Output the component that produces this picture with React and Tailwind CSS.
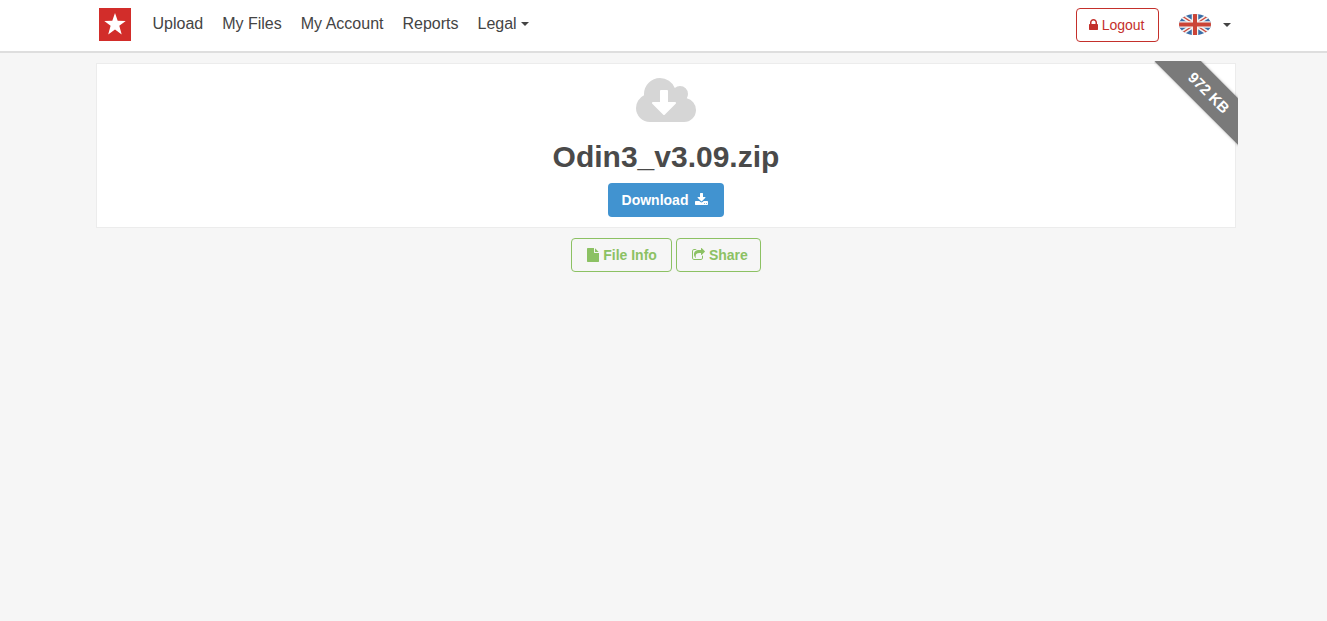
const navLinks = ["Upload", "My Files", "My Account", "Reports"];

const icons = {
  lock: {
    box: "320 0 1152 1792",
    d: "M640 768h512v-192q0-106-75-181t-181-75-181 75-75 181v192zm832 96v576q0 40-28 68t-68 28h-960q-40 0-68-28t-28-68v-576q0-40 28-68t68-28h32v-192q0-184 132-316t316-132 316 132 132 316v192h32q40 0 68 28t28 68z",
  },
  cloud: {
    box: "0 0 1920 1792",
    d: "M1280 928q0-14-9-23t-23-9h-224v-352q0-13-9.5-22.5t-22.5-9.5h-192q-13 0-22.5 9.5t-9.5 22.5v352h-224q-13 0-22.5 9.5t-9.5 22.5q0 14 9 23l352 352q9 9 23 9t23-9l351-351q10-12 10-24zm640 224q0 159-112.5 271.5t-271.5 112.5h-1088q-185 0-316.5-131.5t-131.5-316.5q0-130 70-240t188-165q-2-30-2-43 0-212 150-362t362-150q156 0 285.5 87t188.5 231q71-62 166-62 106 0 181 75t75 181q0 76-41 138 130 31 213.5 135.5t83.5 238.5z",
  },
  download: {
    box: "64 0 1664 1792",
    d: "M1344 1344q0-26-19-45t-45-19-45 19-19 45 19 45 45 19 45-19 19-45zm256 0q0-26-19-45t-45-19-45 19-19 45 19 45 45 19 45-19 19-45zm128-224v320q0 40-28 68t-68 28h-1472q-40 0-68-28t-28-68v-320q0-40 28-68t68-28h465l135 136q58 56 136 56t136-56l136-136h464q40 0 68 28t28 68zm-325-569q17 41-14 70l-448 448q-18 19-45 19t-45-19l-448-448q-31-29-14-70 17-39 59-39h256v-448q0-26 19-45t45-19h256q26 0 45 19t19 45v448h256q42 0 59 39z",
  },
  file: {
    box: "128 0 1536 1792",
    d: "M1152 512v-472q22 14 36 28l408 408q14 14 28 36h-472zm-128 32q0 40 28 68t68 28h544v1056q0 40-28 68t-68 28h-1344q-40 0-68-28t-28-68v-1600q0-40 28-68t68-28h800v544z",
  },
  share: {
    box: "64 0 1664 1792",
    d: "M1472 989v259q0 119-84.5 203.5t-203.5 84.5h-832q-119 0-203.5-84.5t-84.5-203.5v-832q0-119 84.5-203.5t203.5-84.5h255q13 0 22.5 9.5t9.5 22.5q0 27-26 32-77 26-133 60-10 4-16 4h-112q-66 0-113 47t-47 113v832q0 66 47 113t113 47h832q66 0 113-47t47-113v-214q0-19 18-29 28-13 54-37 16-16 35-8 21 9 21 29zm237-496l-384 384q-18 19-45 19-12 0-25-5-39-17-39-59v-192h-160q-323 0-438 131-119 137-74 473 3 23-20 34-8 2-12 2-16 0-26-13-10-14-21-31t-39.5-68.5-49.5-99.5-38.5-114-17.5-122q0-49 3.5-91t14-90 28-88 47-81.5 68.5-74 94.5-61.5 124.5-48.5 159.5-30.5 196.5-11h160v-192q0-42 39-59 13-5 25-5 26 0 45 19l384 384q19 19 19 45t-19 45z",
  },
};

function Icon({ name, className }) {
  return (
    <svg viewBox={icons[name].box} className={className} fill="currentColor" aria-hidden="true">
      <path d={icons[name].d} />
    </svg>
  );
}

function Caret() {
  return <span className="border-x-4 border-t-4 border-x-transparent border-t-[#444]" />;
}

function Flag() {
  return (
    <svg viewBox="0 0 32 21" className="h-[21px] w-8" aria-hidden="true">
      <clipPath id="oval">
        <ellipse cx="16" cy="10.5" rx="16" ry="10.5" />
      </clipPath>
      <g clipPath="url(#oval)">
        <rect width="32" height="21" fill="#3a6ea8" />
        <path d="M0 0l32 21M32 0L0 21" stroke="#f3f3f3" strokeWidth="4.5" />
        <path d="M0 0l32 21M32 0L0 21" stroke="#d0483a" strokeWidth="1.3" />
        <path d="M16 0v21M0 10.5h32" stroke="#f3f3f3" strokeWidth="6.5" />
        <path d="M16 0v21M0 10.5h32" stroke="#cb4436" strokeWidth="4" />
      </g>
    </svg>
  );
}

function Header() {
  return (
    <header className="border-b-2 border-[#dedede] bg-white">
      <div className="mx-auto flex h-[51px] max-w-[1140px] items-center justify-between pr-[3px] pb-0.5 pl-[5px]">
        <nav className="flex items-center gap-[19px] text-base text-[#444]">
          <a href="#" aria-label="Home" className="mr-[3px]">
            <svg viewBox="0 0 32 33" className="h-[33px] w-8" aria-hidden="true">
              <rect width="32" height="33" fill="#d22d2a" />
              <path
                d="M16 5l2.7 7.8 8 .1-6.4 4.9 2.4 8.6-6.7-5-6.8 5 2.4-8.6-6.3-4.9 8-.1z"
                fill="#fff"
              />
            </svg>
          </a>
          {navLinks.map((link) => (
            <a key={link} href="#" className="pb-0.5">
              {link}
            </a>
          ))}
          <button className="flex items-center gap-1 pb-0.5">
            Legal
            <Caret />
          </button>
        </nav>

        <div className="flex items-center gap-5">
          <button className="flex h-[34px] items-center gap-1 rounded border border-[#c4302b] pr-[13px] pl-3 text-sm text-[#c4302b]">
            <Icon name="lock" className="h-3.5 w-[9px]" />
            Logout
          </button>
          <button aria-label="Language" className="flex items-center gap-3">
            <Flag />
            <Caret />
          </button>
        </div>
      </div>
    </header>
  );
}

function SizeRibbon({ size }) {
  return (
    <div className="absolute -top-[3px] -right-[3px] h-[87px] w-[84px] overflow-hidden rounded-xs">
      <div className="absolute top-[15px] -left-2 w-[126px] rotate-45 bg-[#7a7a7a] py-1.5 text-center text-[15px] leading-[21px] font-bold text-white shadow-[0_0_3px_rgba(0,0,0,0.3)]">
        {size}
      </div>
    </div>
  );
}

export default function App() {
  return (
    <div className="min-h-screen bg-[#f6f6f6] font-['Liberation_Sans',Arial,sans-serif]">
      <Header />

      <main className="pt-2.5 pl-[5px]">
        <div className="mx-auto max-w-[1140px]">
          {/* File card */}
          <section className="relative flex flex-col items-center border border-[#ececec] bg-white pt-2.5 pb-2.5">
            <SizeRibbon size="972 KB" />
            <Icon name="cloud" className="h-14 w-[60px] text-[#d6d6d6]" />
            <h1 className="mt-[11px] mb-2.5 text-3xl leading-8 font-bold text-[#4a4a4a]">Odin3_v3.09.zip</h1>
            <button className="flex h-[34px] items-center gap-[7px] rounded bg-[#4193d0] pr-4 pl-3.5 text-sm font-bold text-white">
              Download
              <Icon name="download" className="h-3.5 w-[13px]" />
            </button>
          </section>

          {/* File actions */}
          <div className="mt-2.5 flex justify-center gap-1 text-sm font-bold text-[#8cc163]">
            <button className="flex h-[34px] items-center gap-1 rounded border border-[#8cc163] pr-3.5 pl-[15px]">
              <Icon name="file" className="h-3.5 w-3" />
              File Info
            </button>
            <button className="flex h-[34px] items-center gap-1 rounded border border-[#8cc163] pr-3 pl-[15px]">
              <Icon name="share" className="h-3.5 w-[13px]" />
              Share
            </button>
          </div>
        </div>
      </main>
    </div>
  );
}
